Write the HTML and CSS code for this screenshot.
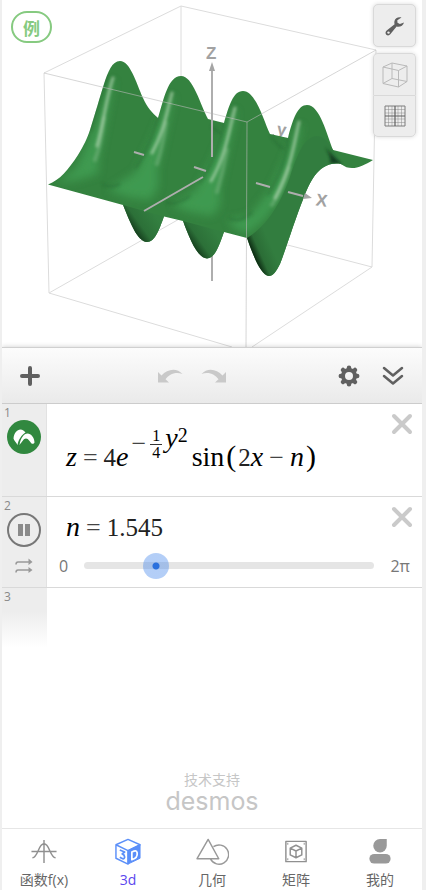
FILE: index.html
```html
<!DOCTYPE html>
<html lang="zh-CN">
<head>
    <meta charset="UTF-8">
    <meta name="viewport" content="width=device-width, initial-scale=1.0">
    <title>3d</title>
    <link rel="stylesheet" href="styles.css">
</head>
<body>
    <div class="app">
        <section class="graph">
            <svg class="plot" viewBox="2 0 420 347" preserveAspectRatio="xMidYMin slice">
                <defs>
                    <clipPath id="surface-clip">
                        <path d="M48 184.500C60 180 68 170 78 155C84 145 87 139 90 130C96 111 99 100 104 84C108 72 112 61 120 61C130 61 136 82 143 98C147 107 152 113 158 118C164 99 168 76 181 76C193 76 200 104 208 119L224 123C229 106 233 91 243 91C256 91 264 122 270 134L288 138C293 118 298 105 307 105C320 105 327 135 333 150L373 160C361 167 351 172 341 164C318 160 309 185 304 197C295 219 287 246 280 264C276 272 273 276 269 276C260 275 252 252 247 238L224 232C219 246 215 258 207 258.500C197 258 189 237 183 221L164 216.500C159 230 155 242 147 242C137 241 131 224 123 205Z"/>
                    </clipPath>
                    <linearGradient id="face" x1="247" y1="240" x2="265" y2="232" gradientUnits="userSpaceOnUse">
                        <stop offset="0" stop-color="#0d2c13"/>
                        <stop offset=".35" stop-color="#2b6d36"/>
                        <stop offset="1" stop-color="#327d3f"/>
                    </linearGradient>
                    <linearGradient id="dip" x1="0" y1=".4" x2=".6" y2="0">
                        <stop offset="0" stop-color="#0f3016"/>
                        <stop offset=".4" stop-color="#2c7038"/>
                        <stop offset="1" stop-color="#337f40"/>
                    </linearGradient>
                    <filter id="soft" x="-50%" y="-50%" width="200%" height="200%"><feGaussianBlur stdDeviation="4"/></filter>
                    <filter id="fine" x="-50%" y="-50%" width="200%" height="200%"><feGaussianBlur stdDeviation="1.500"/></filter>
                </defs>

                <!-- box edges behind the surface -->
                <g class="edge">
                    <path d="M44 73L181 6L376 50M181 6V90M44 73L49 293L181 218M49 293L232 347M376 50L372 267L252 347M372 267L280 243"/>
                </g>
                <path class="axis" d="M212 250V281"/>
                <text class="axis-name" x="277" y="135" transform="rotate(8 280 130)">y</text>
                <path class="axis-head" d="M271 135L275 139L274 134Z"/>

                <g clip-path="url(#surface-clip)">
                    <rect class="green" x="40" y="50" width="340" height="235"/>
                    <!-- light front skirts -->
                    <g filter="url(#soft)" fill="#43a054" opacity=".8">
                        <path d="M110 82L114 80L106 122L99 158L98 174L78 180L56 183L76 168L94 130Z"/>
                        <path d="M169 98L174 96L166 132L158 168L158 188L150 200L128 197L108 190L136 172L150 142Z"/>
                        <path d="M232 112L237 110L228 150L220 186L220 206L212 216L190 212L172 206L196 190L212 160Z"/>
                        <path d="M297 126L302 125L294 158L280 198L264 220L246 234L234 228L228 220L250 216L270 190L284 160Z"/>
                    </g>
                    <!-- shaded hollows and hill outlines -->
                    <g filter="url(#fine)" fill="none" stroke="#286a34" stroke-width="2" opacity=".55">
                        <path d="M102 184C107 187 114 187 120 184M166 202C172 205 180 203 190 196M229 218C236 222 244 220 252 212"/>
                        <path d="M107 76C102 91 96 112 90 131M158 118C152 137 147 151 136 168M224 123C220 147 212 165 200 183M288 138C286 160 279 176 268 195"/>
                        <path d="M211 126L221 134M271 136C278 146 281 148 284 149"/>
                    </g>
                    <!-- gloss -->
                    <g filter="url(#fine)" fill="none" stroke="#c0dfbf" stroke-linecap="round">
                        <path stroke-width="3" opacity=".62" d="M113 78C107 95 104 120 97 146M172 93C166 115 164 131 152 153M235 108C229 130 226 155 211 181M299 122C293 148 292 165 275 198"/>
                        <path stroke-width="4" opacity=".25" d="M104 118Q101 145 95 160M166 123Q163 145 157 164M227 150Q223 172 217 192M289 168Q284 187 272 205"/>
                    </g>
                    <!-- undersides -->
                    <path fill="url(#dip)" d="M123 205L164 216.500L160 243H130Z"/>
                    <path fill="url(#dip)" d="M183 221L224 232L220 260H190Z"/>
                    <path fill="url(#face)" d="M247 238C267 226 281 203 290 177C298 152 305 136 317 136C328 136 333 152 343 164L310 200L285 277H250Z"/>
                    <path filter="url(#fine)" fill="#10351a" opacity=".85" d="M325 147C330 153 335 158 342 164L330 163C332 159 328 152 325 147Z"/>
                </g>

                <g class="edge edge-front">
                    <path d="M44 73L247 122L376 50M247 122L246 347"/>
                </g>
                <path class="axis" d="M212 68V157M144 211L203 177M134 152L144 155M194 167L206 171M256 183L270 187M288 192L303 196"/>
                <path class="axis-head" d="M212 62L215 71H209ZM312 198L303 199L305 193Z"/>
                <text class="axis-name" x="206" y="59">Z</text>
                <text class="axis-name" x="316" y="206" transform="rotate(8 321 200)">X</text>
            </svg>
            <button class="example">例</button>
            <div class="graph-tools">
                <button class="tool" aria-label="设置">
                    <svg width="22" height="22" viewBox="0 0 22 22">
                        <path fill="#5f5f5f" d="M17.500 2.600C14.500 1.500 11 3.300 10.400 6.200C10.200 7.500 10.300 8.400 10.600 9.300L2.700 15.500C1.300 16.700 1.200 18.500 2.300 19.700C3.500 20.800 5.300 20.600 6.300 19.300L12.600 11.600C15.500 12.500 19.300 10.900 20 7.500L15.900 9L13.500 7.800L13.300 5.300Z"/>
                        <circle cx="4.500" cy="17.600" r="1.200" fill="#ededed"/>
                    </svg>
                </button>
                <div class="tool-group">
                    <button class="tool" aria-label="立方体">
                        <svg width="28" height="28" viewBox="0 0 28 28" fill="none" stroke="#b9b9b9">
                            <path d="M2 6L17.500 9.500V26L2 22.500ZM11 2L26 5V20.500L11 17.500ZM2 6L11 2M17.500 9.500L26 5M17.500 26L26 20.500M2 22.500L11 17.500"/>
                        </svg>
                    </button>
                    <button class="tool" aria-label="网格">
                        <svg width="22" height="22" viewBox="0 0 22 22" fill="none" stroke="#8a8a8a">
                            <path stroke-width=".5" d="M4.500 1V21M8 1V21M14 1V21M17.500 1V21M1 4.500H21M1 8H21M1 14H21M1 17.500H21"/>
                            <path stroke="#7c7c7c" d="M1 1H21V21H1Z"/>
                            <path stroke="#606060" stroke-width="1.200" d="M11 1V21M1 11H21"/>
                        </svg>
                    </button>
                </div>
            </div>
        </section>

        <div class="toolbar">
            <button class="tb-button tb-add" aria-label="添加">
                <svg width="22" height="22" viewBox="0 0 22 22" stroke="#606060" stroke-width="4" stroke-linecap="round"><path d="M11 3V19M3 11H19"/></svg>
            </button>
            <div class="tb-group">
                <button class="tb-button" aria-label="撤销">
                    <svg width="26" height="16" viewBox="0 0 26 16" fill="#c9c9c9"><path d="M1 4V14.500H12L8.500 11.300C12 6.500 18 3.500 25.500 6C20 -.500 10.500 .500 4.500 7.500Z"/></svg>
                </button>
                <button class="tb-button" aria-label="重做">
                    <svg width="26" height="16" viewBox="0 0 26 16" fill="#c9c9c9"><path d="M25 4V14.500H14L17.500 11.300C14 6.500 8 3.500 .500 6C6 -.500 15.500 .500 21.500 7.500Z"/></svg>
                </button>
            </div>
            <div class="tb-group">
                <button class="tb-button" aria-label="选项">
                    <svg width="22" height="22" viewBox="-11 -11 22 22" fill="none" stroke="#606060">
                        <circle r="6" stroke-width="4"/>
                        <path stroke-width="4.500" stroke-linecap="round" d="M0 -7.500V-8.200M0 7.500V8.200M-7.500 0H-8.200M7.500 0H8.200M-5.400 -5.400L-6 -6M5.400 5.400L6 6M-5.400 5.400L-6 6M5.400 -5.400L6 -6"/>
                    </svg>
                </button>
                <button class="tb-button" aria-label="收起">
                    <svg width="22" height="20" viewBox="0 0 22 20" fill="none" stroke="#606060" stroke-width="2.500" stroke-linecap="round" stroke-linejoin="round"><path d="M2 2L11 9.500L20 2M2 10L11 17.500L20 10"/></svg>
                </button>
            </div>
        </div>

        <main class="list">
            <div class="row">
                <div class="gutter">
                    <span class="index">1</span>
                    <button class="round" aria-label="隐藏曲面">
                        <svg width="34" height="34" viewBox="0 0 34 34">
                            <circle cx="17" cy="17" r="17" fill="#31883f"/>
                            <path fill="#fff" d="M10.500 25C9 22 7 20.500 6.500 18.500C7 13 10 9.500 13.500 9.500C15.500 9.500 17.500 11 18.500 12.500C14.500 15 11.500 19.500 10.500 25Z"/>
                            <path fill="#fff" d="M12.500 25C13.500 18 17 13.500 20.500 13.500C24 13.500 27.500 17.500 27.500 22.500C27 24 25.500 24 24.500 23.500C23 22 21.500 18.500 19 18.500C16.500 18.500 15 22 12.500 25Z"/>
                        </svg>
                    </button>
                </div>
                <div class="content formula-row">
                    <div class="math">
                        <i>z</i><span class="op op-wide">=</span><b>4</b><i>e</i>
                        <span class="power">
                            <span class="op minus">−</span>
                            <span class="frac"><span>1</span><span>4</span></span>
                            <i>y</i><span class="square">2</span>
                        </span>
                        <span class="fn">sin</span><span class="paren">(</span><b>2</b><i>x</i><span class="op op-wide">−</span><i>n</i><span class="paren">)</span>
                    </div>
                </div>
                <button class="close" aria-label="删除">
                    <svg width="22" height="22" viewBox="0 0 22 22" stroke="#cacaca" stroke-width="4" stroke-linecap="round"><path d="M3 3L19 19M19 3L3 19"/></svg>
                </button>
            </div>

            <div class="row">
                <div class="gutter">
                    <span class="index">2</span>
                    <button class="round" aria-label="暂停">
                        <svg width="34" height="34" viewBox="0 0 34 34">
                            <circle cx="17" cy="17" r="16" fill="none" stroke="#777" stroke-width="2"/>
                            <path fill="#8a8a8a" d="M11 11H16V23H11ZM18 11H23V23H18Z"/>
                        </svg>
                    </button>
                    <button class="loop" aria-label="循环">
                        <svg width="18" height="16" viewBox="0 0 18 16" fill="none" stroke="#999" stroke-width="1.500"><path d="M1 6.500C1 4.500 1.500 4 3 4H15M1 14.500C1 12.500 1.500 12 3 12H15"/><path fill="#999" stroke="none" d="M13.500 .500L17.500 4L13.500 7ZM13.500 9L17.500 12L13.500 15Z"/></svg>
                    </button>
                </div>
                <div class="content slider-row">
                    <label class="math" for="n-value"><i>n</i><span class="op op-wide">=</span><b>1.545</b></label>
                    <div class="slider">
                        <span class="limit">0</span>
                        <div class="track"><input type="range" id="n-value" min="0" max="6.283" step="0.001" value="1.545"></div>
                        <span class="limit">2π</span>
                    </div>
                </div>
                <button class="close" aria-label="删除">
                    <svg width="22" height="22" viewBox="0 0 22 22" stroke="#cacaca" stroke-width="4" stroke-linecap="round"><path d="M3 3L19 19M19 3L3 19"/></svg>
                </button>
            </div>

            <div class="row row-empty">
                <div class="gutter"><span class="index">3</span></div>
            </div>

            <div class="powered">
                <span>技术支持</span>
                <span class="brand">desmos</span>
            </div>
        </main>

        <nav class="tabs">
            <a href="#" class="tab">
                <svg width="28" height="28" viewBox="0 0 28 28" fill="none" stroke="#909090" stroke-width="1.500"><path d="M14 2V26M1 14H27M2 20.500C8 20 8 6 14 6S20 20 26 20.500"/></svg>
                <span>函数f(x)</span>
            </a>
            <a href="#" class="tab active">
                <svg width="28" height="28" viewBox="0 0 28 28" stroke="#5b8ff9" stroke-linejoin="round">
                    <path fill="#fff" stroke-width="1.500" d="M14 1.500L26.500 7L14 13L1.500 7ZM1.500 7L14 13V27L1.500 21Z"/>
                    <path fill="#5b8ff9" d="M14 13L26.500 7V21L14 27Z"/>
                    <path fill="none" stroke-width="1.800" d="M5.500 12.500L10.500 14.500L8 16.500C11.500 18 11 22 8.500 21.500L5.500 20"/>
                    <path fill="none" stroke="#fff" stroke-width="1.800" d="M18 14.500V22.500C22 21.500 24 19 23.500 15.500C23 12.500 21 13 18 14.500Z"/>
                </svg>
                <span>3d</span>
            </a>
            <a href="#" class="tab">
                <svg width="34" height="28" viewBox="0 0 34 28" fill="none" stroke="#999" stroke-width="1.500" stroke-linejoin="round"><path d="M13 1.500L24 21.500H1.500ZM18.500 9A10 10 0 1 1 15.500 22"/></svg>
                <span>几何</span>
            </a>
            <a href="#" class="tab">
                <svg width="28" height="28" viewBox="0 0 28 28" fill="none" stroke="#909090" stroke-width="1.500" stroke-linejoin="round"><path d="M3.500 3.500H24.500V24.500H3.500ZM14 7.500L20 10.500V17.500L14 20.500L8 17.500V10.500ZM8 10.500L14 13.500L20 10.500M14 13.500V20.500"/><path stroke-width="2" d="M5 6H6M22 6H23M5 22H6M22 22H23"/></svg>
                <span>矩阵</span>
            </a>
            <a href="#" class="tab">
                <svg width="28" height="28" viewBox="0 0 28 28" fill="#999"><path d="M21 1V8A7 7 0 1 1 14 1Z"/><rect x="3" y="16.500" width="22" height="10" rx="5"/></svg>
                <span>我的</span>
            </a>
        </nav>
    </div>
</body>
</html>
```
FILE: styles.css
```css
* {
    box-sizing: border-box;
}

body {
    margin: 0;
    background-color: #efefef;
    font-family: "Open Sans", "Noto Sans CJK SC", sans-serif;
    color: #777;
}

button {
    display: flex;
    align-items: center;
    justify-content: center;
    padding: 0;
    border: none;
    background: none;
    cursor: pointer;
}

.app {
    display: flex;
    flex-direction: column;
    min-height: 100vh;
    margin: 0 4px 0 2px;
    background-color: #fff;
}

/* graph */
.graph {
    position: relative;
}

.plot {
    display: block;
    width: 100%;
}

.edge {
    fill: none;
    stroke: #dcdcdc;
    stroke-width: 1;
}

.edge-front {
    stroke: #bbb;
    stroke-opacity: 0.6;
}

.green {
    fill: #34823f;
}

.axis {
    fill: none;
    stroke: #aeaeae;
    stroke-width: 2;
}

.axis-head {
    fill: #a5a5a5;
}

.axis-name {
    font: bold 17px "Liberation Sans", sans-serif;
    fill: #a2a2a2;
}

.example {
    position: absolute;
    top: 11px;
    left: 9px;
    width: 41px;
    height: 32px;
    border: 2px solid #86ca80;
    border-radius: 16px;
    color: #86ca80;
    font: bold 17px "Noto Sans CJK SC", sans-serif;
}

.graph-tools {
    position: absolute;
    top: 4px;
    right: 6px;
    display: flex;
    flex-direction: column;
    gap: 6px;
}

.tool {
    width: 43px;
    height: 43px;
    border: 1px solid #d9d9d9;
    border-radius: 5px;
    background-color: #ededed;
    box-shadow: 0 0 4px rgba(0, 0, 0, 0.15);
}

.tool-group {
    border-radius: 5px;
    box-shadow: 0 0 4px rgba(0, 0, 0, 0.15);
}

.tool-group .tool {
    height: 42px;
    box-shadow: none;
}

.tool-group .tool:first-child {
    border-bottom: none;
    border-radius: 5px 5px 0 0;
}

.tool-group .tool:last-child {
    border-radius: 0 0 5px 5px;
}

/* toolbar */
.toolbar {
    display: flex;
    align-items: center;
    justify-content: space-between;
    height: 57px;
    padding: 0 7px 0 2px;
    border-top: 1px solid #d0d0d0;
    border-bottom: 1px solid #ccc;
    background: linear-gradient(#fcfcfc, #eaeaea);
    box-shadow: 0 0 5px rgba(0, 0, 0, 0.2);
    clip-path: inset(-6px 0 0 0);
}

.tb-group {
    display: flex;
}

.tb-button {
    width: 44px;
    height: 44px;
}

.tb-add {
    width: 52px;
}

/* expression list */
.list {
    flex: 1;
    display: flex;
    flex-direction: column;
}

.row {
    display: flex;
    min-height: 91px;
    border-bottom: 1px solid #d9d9d9;
}

.row:first-child {
    min-height: 93px;
}

.gutter {
    display: flex;
    flex-direction: column;
    align-items: center;
    width: 45px;
    border-right: 1px solid #e2e2e2;
    background-color: #ededed;
}

.index {
    align-self: flex-start;
    height: 16px;
    padding-left: 2px;
    font-size: 12px;
    line-height: 18px;
    color: #888;
}

.round {
    width: 34px;
    height: 34px;
}

.loop {
    width: 34px;
    height: 32px;
    padding-top: 6px;
}

.content {
    flex: 1;
    padding-left: 19px;
}

.close {
    align-self: flex-start;
    width: 40px;
    height: 40px;
    margin-left: -40px;
}

.formula-row {
    padding-top: 14px;
}

.math {
    display: flex;
    align-items: baseline;
    font-family: "Liberation Serif", serif;
    font-size: 28px;
    line-height: 32px;
    color: #000;
}

/* leaves room above the baseline for the exponent */
.formula-row .math {
    line-height: 76px;
}

.math b {
    font-size: 25px;
    font-weight: normal;
    color: #222;
}

.op {
    font-size: 26px;
    color: #444;
}

.op-wide {
    margin: 0 6px;
}

.power {
    display: flex;
    align-items: flex-start;
    align-self: flex-start;
    margin: 4px 4px 0 3px;
    line-height: 32px;
}

.minus {
    line-height: 44px;
}

.frac {
    display: flex;
    flex-direction: column;
    align-items: center;
    margin: 6px 3px 0 4px;
    font-size: 16px;
    line-height: 16px;
}

.frac span {
    padding: 0 2px;
}

.frac span:first-child {
    border-bottom: 1px solid #333;
}

.square {
    font-size: 20px;
    line-height: 26px;
}

.paren {
    padding: 0 2px;
    font-size: 30px;
}

.slider-row {
    padding-top: 14px;
    padding-right: 12px;
}

.slider {
    display: flex;
    align-items: center;
    gap: 16px;
    height: 43px;
    margin-left: -7px;
}

.limit {
    font-size: 16px;
    line-height: 20px;
}

.track {
    flex: 1;
    display: flex;
    align-items: center;
    height: 7px;
    border-radius: 4px;
    background-color: #e5e5e5;
}

/* the input is wider than the bar by one thumb, so the thumb centre meets both ends */
.track input {
    appearance: none;
    flex: none;
    width: calc(100% + 26px);
    height: 26px;
    margin: 0 -13px;
    background: none;
}

.track input::-webkit-slider-thumb {
    appearance: none;
    width: 26px;
    height: 26px;
    border-radius: 50%;
    background: radial-gradient(circle, #2b70dd 3px, rgba(66, 133, 235, 0.4) 4px);
}

.row-empty {
    min-height: 60px;
    border-bottom: none;
}

.row-empty .gutter {
    background: linear-gradient(#ededed 40%, #fff);
    border-right: none;
}

.powered {
    display: flex;
    flex-direction: column;
    align-items: center;
    margin-top: auto;
    padding-bottom: 14px;
    color: #c6c6c6;
    font-size: 14px;
    line-height: 16px;
}

.brand {
    font-family: Inter, sans-serif;
    font-size: 25px;
    line-height: 26px;
}

/* bottom tabs */
.tabs {
    display: flex;
    height: 62px;
    padding-top: 9px;
    border-top: 1px solid #e6e6e6;
}

.tab {
    flex: 1;
    display: flex;
    flex-direction: column;
    align-items: center;
    gap: 5px;
    color: #666;
    font-size: 14px;
    line-height: 20px;
    text-decoration: none;
    white-space: nowrap;
}

.active {
    color: #5b46ee;
}
```
